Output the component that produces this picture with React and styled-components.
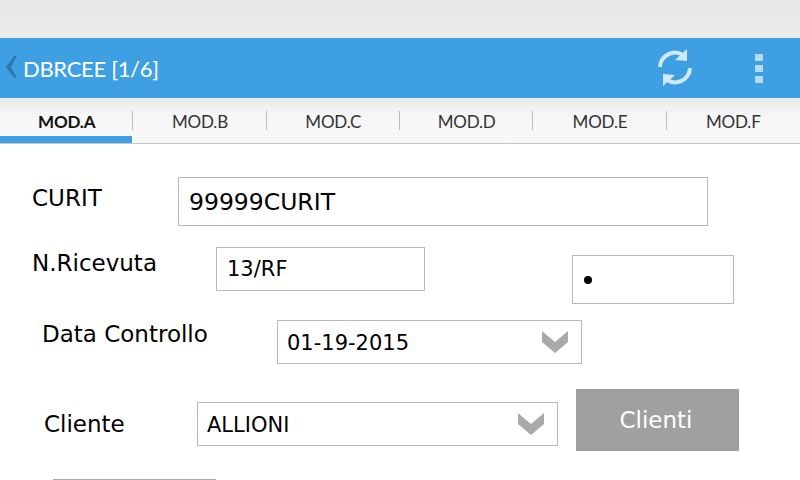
import React from 'react'
import styled, { createGlobalStyle } from 'styled-components'

const GlobalStyle = createGlobalStyle`
  html, body {
    margin: 0;
    padding: 0;
    background: #fff;
  }
  * {
    box-sizing: border-box;
  }
`

const Screen = styled.div`
  width: 800px;
  height: 480px;
  overflow: hidden;
  display: flex;
  flex-direction: column;
  background: #fff;
  font-family: "DejaVu Sans", sans-serif;
  color: #000;
`

const StatusBar = styled.div`
  height: 38px;
  flex: none;
  background: linear-gradient(#e6e6e6, #ebebeb);
`

const ActionBar = styled.header`
  height: 60px;
  flex: none;
  display: flex;
  align-items: center;
  padding-left: 6px;
  background: #3f9fe3;
`

const BackIcon = styled.svg`
  width: 12px;
  height: 22px;
  margin-right: 6px;
  margin-top: -2px;
`

const Title = styled.h1`
  flex: 1;
  margin: 0 0 0 -1px;
  font-family: Lato, sans-serif;
  font-size: 22px;
  letter-spacing: -0.3px;
  font-weight: 400;
  color: #fff;
`

const SyncIcon = styled.svg`
  width: 36px;
  height: 38px;
  margin-right: 62px;
`

const Kebab = styled.div`
  display: flex;
  flex-direction: column;
  gap: 4px;
  margin-right: 37px;
`

const KebabDot = styled.span`
  width: 8px;
  height: 7px;
  background: #b4daf5;
`

const TabBar = styled.nav`
  height: 46px;
  flex: none;
  display: flex;
  background: linear-gradient(#ebebeb, #f6f6f6 40%, #f8f8f8);
  border-bottom: 1px solid #c6c6c6;
`

const Tab = styled.div`
  position: relative;
  flex: 1;
  display: flex;
  justify-content: center;
  padding-top: 13px;
  font-family: Lato, sans-serif;
  font-size: 17px;
  letter-spacing: -0.2px;
  font-weight: ${props => (props.$active ? 700 : 400)};
  color: ${props => (props.$active ? '#111' : '#333')};

  &:not(:last-child)::after {
    content: "";
    position: absolute;
    right: 0;
    top: 13px;
    width: 1px;
    height: 19px;
    background: #bdbdbd;
  }

  ${props => props.$active && `
    &::before {
      content: "";
      position: absolute;
      left: 0;
      right: 1px;
      bottom: 0;
      height: 7px;
      background: #3f9fe3;
    }
  `}
`

const Form = styled.main`
  flex: 1;
  display: flex;
  flex-direction: column;
  padding-top: 33px;
`

const Row = styled.div`
  display: flex;
  align-items: flex-start;
  padding-left: ${props => props.$indent}px;
  margin-bottom: ${props => props.$after || 0}px;
`

const Label = styled.label`
  width: ${props => props.$width}px;
  flex: none;
  padding-top: ${props => props.$top}px;
  font-size: 23px;
  line-height: 26px;
`

const Field = styled.div`
  width: ${props => props.$width}px;
  height: ${props => props.$height}px;
  flex: none;
  display: flex;
  align-items: center;
  justify-content: space-between;
  padding: 0 13px 0 ${props => props.$pad || 9}px;
  border: 1px solid #b9b9b9;
  font-size: ${props => props.$size || 21}px;
  background: #fff;
`

const FieldText = styled.span`
  padding-top: 2px;
`

const Dot = styled.span`
  width: 8px;
  height: 8px;
  border-radius: 50%;
  background: #000;
  margin-left: 2px;
`

const DotField = styled(Field)`
  margin-left: 147px;
  margin-top: 8px;
`

const Chevron = styled.svg`
  width: 26px;
  height: 22px;
  flex: none;
`

const ClientButton = styled.button`
  width: 163px;
  height: 62px;
  flex: none;
  margin: -13px 0 0 18px;
  padding: 0 3px 0 0;
  border: 0;
  background: #a0a0a0;
  color: #fff;
  font-family: "DejaVu Sans", sans-serif;
  font-size: 23px;
`

const NextField = styled.div`
  width: 163px;
  height: 30px;
  flex: none;
  border: 1px solid #a8a8a8;
`

const ChevronDown = () => (
  <Chevron viewBox="0 0 26 22">
    <polygon points="0,0 13,11 26,0 26,11 13,22 0,11" fill="#a9a9a9" />
  </Chevron>
)

const tabs = ['MOD.A', 'MOD.B', 'MOD.C', 'MOD.D', 'MOD.E', 'MOD.F']

export default function App() {
  return (
    <Screen>
      <GlobalStyle />
      <StatusBar />
      <ActionBar>
        <BackIcon viewBox="0 0 12 22">
          <polygon points="8,0 11,0 5,11 11,22 8,22 0,11" fill="#2c79b1" />
        </BackIcon>
        <Title>DBRCEE [1/6]</Title>
        <SyncIcon viewBox="0 0 36 38">
          <g fill="none" stroke="#cfe8fa" strokeWidth="4">
            <path d="M3 18 A15 15 0 0 1 26 6" />
            <path d="M33 19 A15 15 0 0 1 10 31" />
          </g>
          <polygon points="30,0 30,12 18,11" fill="#cfe8fa" />
          <polygon points="6,37 6,25 18,26" fill="#cfe8fa" />
        </SyncIcon>
        <Kebab>
          <KebabDot />
          <KebabDot />
          <KebabDot />
        </Kebab>
      </ActionBar>
      <TabBar>
        {tabs.map((tab, i) => (
          <Tab key={tab} $active={i === 0}>{tab}</Tab>
        ))}
      </TabBar>
      <Form>
        <Row $indent={32} $after={21}>
          <Label $width={146} $top={8}>CURIT</Label>
          <Field $width={530} $height={49} $size={23.5} $pad={10}>99999CURIT</Field>
        </Row>
        <Row $indent={32} $after={16}>
          <Label $width={184} $top={3}>N.Ricevuta</Label>
          <Field $width={209} $height={44} $pad={10}>13/RF</Field>
          <DotField $width={162} $height={49}><Dot /></DotField>
        </Row>
        <Row $indent={42} $after={38}>
          <Label $width={235} $top={1}>Data Controllo</Label>
          <Field $width={305} $height={44}>
            <FieldText>01-19-2015</FieldText>
            <ChevronDown />
          </Field>
        </Row>
        <Row $indent={44} $after={28}>
          <Label $width={153} $top={9}>Cliente</Label>
          <Field $width={361} $height={44}>
            <FieldText>ALLIONI</FieldText>
            <ChevronDown />
          </Field>
          <ClientButton>Clienti</ClientButton>
        </Row>
        <Row $indent={53}>
          <NextField />
        </Row>
      </Form>
    </Screen>
  )
}
